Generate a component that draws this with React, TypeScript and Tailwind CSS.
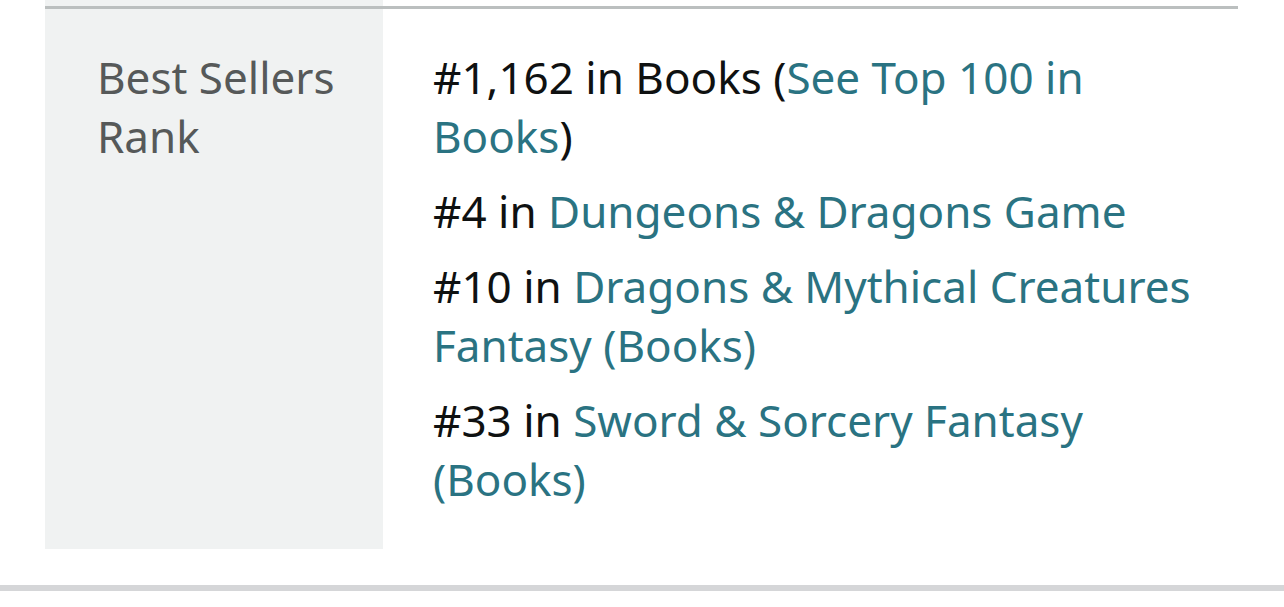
const ranks = [
  { rank: "#4", label: "Dungeons & Dragons Game" },
  { rank: "#10", label: "Dragons & Mythical Creatures Fantasy (Books)" },
  { rank: "#33", label: "Sword & Sorcery Fantasy (Books)" },
];

export default function App() {
  return (
    <main className="min-h-screen bg-white" style={{ fontFamily: "'Noto Sans', sans-serif" }}>
      <div className="px-[45px] pr-[46px]">
        <div className="flex border-t-[3px] border-[#bbbfbf] mt-[6px] relative">
          <div className="absolute left-0 -top-[9px] w-[338px] h-[6px] bg-[#f0f2f2]" />
          <div className="w-[338px] shrink-0 bg-[#f0f2f2] pl-[52px] pt-[39px] pb-[40px] text-[44px] leading-[59px] text-[#565959]">
            Best Sellers Rank
          </div>
          <div className="flex-1 pl-[50px] pr-[38px] pt-[39px] pb-[40px] text-[44px] leading-[59px] text-[#0f1111]">
            <div>
              #1,162 in Books (<a className="text-[#2a7382]">See Top 100 in Books</a>)
            </div>
            {ranks.map((r) => (
              <div key={r.rank} className="mt-[16px]">
                {r.rank} in <a className="text-[#2a7382]">{r.label}</a>
              </div>
            ))}
          </div>
        </div>
      </div>
      <div className="mt-[36px] h-[6px] bg-[#d5d6d8]" />
    </main>
  );
}
